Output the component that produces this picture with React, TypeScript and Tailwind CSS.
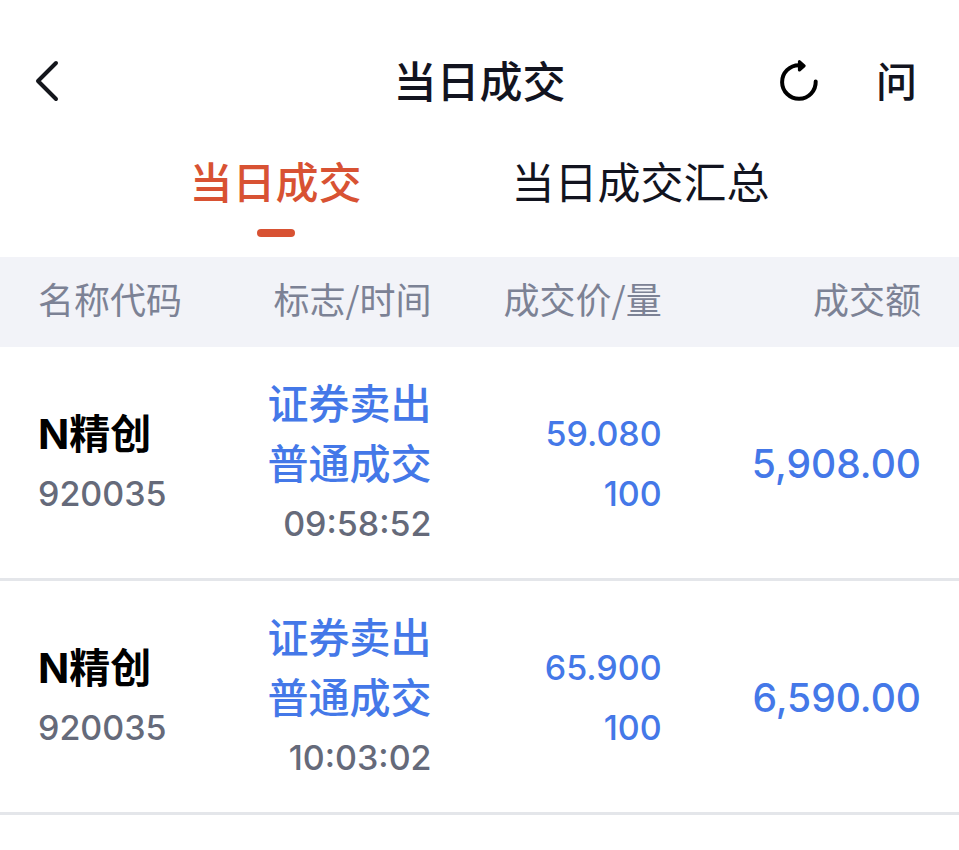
import { useState } from "react";

interface Deal {
  name: string;
  code: string;
  side: string;
  kind: string;
  time: string;
  price: string;
  volume: string;
  amount: string;
}

const tabs = ["当日成交", "当日成交汇总"];

const deals: Deal[] = [
  {
    name: "N精创",
    code: "920035",
    side: "证券卖出",
    kind: "普通成交",
    time: "09:58:52",
    price: "59.080",
    volume: "100",
    amount: "5,908.00",
  },
  {
    name: "N精创",
    code: "920035",
    side: "证券卖出",
    kind: "普通成交",
    time: "10:03:02",
    price: "65.900",
    volume: "100",
    amount: "6,590.00",
  },
];

function Header() {
  return (
    <header className="grid grid-cols-[1fr_auto_1fr] items-center px-8 pt-12">
      <button type="button" aria-label="返回" className="justify-self-start">
        <svg
          className="w-8 h-11"
          viewBox="0 0 32 44"
          fill="none"
          stroke="#14161c"
          strokeWidth="4"
          strokeLinecap="round"
          strokeLinejoin="round"
        >
          <path d="M24 3 L6 21 L24 39" />
        </svg>
      </button>
      <h1 className="text-[43px] leading-[68px] font-medium text-[#12141f]">
        当日成交
      </h1>
      <div className="flex items-center justify-end gap-[55px] pr-[10px]">
        <button type="button" aria-label="刷新">
          <svg
            className="w-11 h-11"
            viewBox="0 0 44 44"
            fill="none"
            stroke="#000"
            strokeWidth="4"
            strokeLinecap="round"
            strokeLinejoin="round"
          >
            <path d="M38.7 21.5 A16.8 16.8 0 1 1 21.9 5.2 L24 5.3" />
            <path d="M22.4 1.6 L27.2 5.8 L22.4 10 Z" fill="#000" strokeWidth="3" />
          </svg>
        </button>
        <button
          type="button"
          className="text-[41px] leading-[68px] font-medium text-[#12141f]"
        >
          问
        </button>
      </div>
    </header>
  );
}

interface TabsProps {
  active: number;
  onChange: (index: number) => void;
}

function Tabs({ active, onChange }: TabsProps) {
  return (
    <nav className="flex justify-center gap-[150px] pt-[37px] pb-5">
      {tabs.map((tab, index) => (
        <button
          key={tab}
          type="button"
          onClick={() => onChange(index)}
          className={`flex flex-col items-center gap-4 text-[43px] leading-[60px] ${
            active === index ? "font-medium text-[#d85233]" : "text-[#12141f]"
          }`}
        >
          {tab}
          <span
            className={`w-[38px] h-2 rounded-full ${
              active === index ? "bg-[#d85233]" : ""
            }`}
          />
        </button>
      ))}
    </nav>
  );
}

function DealRow({ deal }: { deal: Deal }) {
  return (
    <tr className="border-b-3 border-[#e4e6ea] text-right text-[34px] leading-[60px] font-medium text-[#4478e8]">
      <td className="pl-[38px] pt-[27px] pb-6 text-left">
        <div className="text-[41px] font-bold text-black">{deal.name}</div>
        <div className="text-[#656a7a]">{deal.code}</div>
      </td>
      <td className="pt-[27px] pb-6">
        <div className="text-[41px]">{deal.side}</div>
        <div className="text-[41px]">{deal.kind}</div>
        <div className="text-[#656a7a]">{deal.time}</div>
      </td>
      <td className="pt-[27px] pb-6">
        <div>{deal.price}</div>
        <div>{deal.volume}</div>
      </td>
      <td className="pr-[38px] pt-[27px] pb-6 text-[39px]">{deal.amount}</td>
    </tr>
  );
}

function App() {
  const [active, setActive] = useState(0);

  return (
    <div className="min-h-screen bg-white font-['Inter','Noto_Sans_CJK_SC',sans-serif]">
      <Header />
      <Tabs active={active} onChange={setActive} />
      <table className="w-full table-fixed border-collapse">
        <thead className="font-['Noto_Sans_CJK_SC',sans-serif]">
          <tr className="h-[90px] bg-[#f2f3f8] text-right text-[36px] leading-[60px] text-[#7c8295]">
            <th className="w-[22%] pl-[38px] pb-2 text-left font-normal">
              名称代码
            </th>
            <th className="w-[23%] pb-2 font-normal">标志/时间</th>
            <th className="w-[24%] pb-2 font-normal">成交价/量</th>
            <th className="w-[31%] pr-[38px] pb-2 font-normal">成交额</th>
          </tr>
        </thead>
        <tbody>
          {deals.map((deal) => (
            <DealRow key={deal.time} deal={deal} />
          ))}
        </tbody>
      </table>
    </div>
  );
}

export default App;
